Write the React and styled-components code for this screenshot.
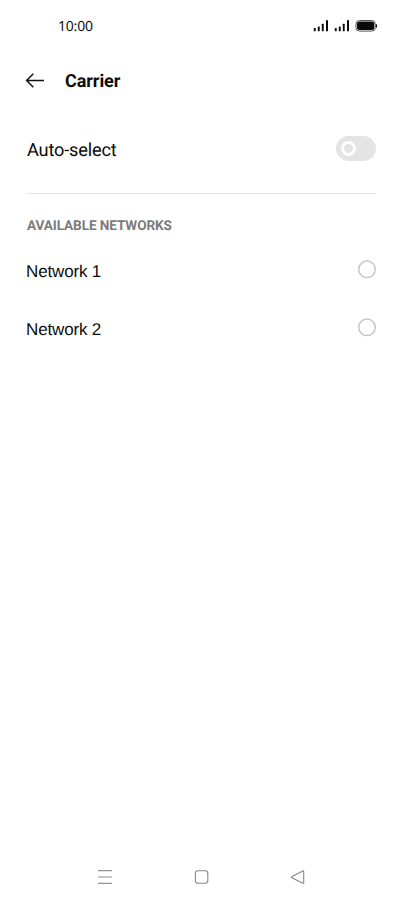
import React, { useState } from 'react';
import styled, { createGlobalStyle } from 'styled-components';

const GlobalStyle = createGlobalStyle`
  * { box-sizing: border-box; }
  body {
    margin: 0;
    background: #fff;
  }
`;

const Screen = styled.div`
  display: flex;
  flex-direction: column;
  width: 403px;
  height: 902px;
  overflow: hidden;
  background: #fff;
  color: #0c0c0c;
  font-family: Roboto, sans-serif;
  text-rendering: geometricPrecision;
`;

const StatusBar = styled.div`
  display: flex;
  align-items: center;
  justify-content: space-between;
  height: 52px;
  padding: 0 26px 0 58px;
`;

const Clock = styled.span`
  padding-top: 2px;
  font-family: "Noto Sans", sans-serif;
  font-size: 14px;
  line-height: 20px;
  letter-spacing: -0.2px;
  color: #111;
`;

const Header = styled.header`
  display: flex;
  align-items: center;
  height: 57px;
  padding-left: 25px;
`;

const BackButton = styled.button`
  display: flex;
  width: 40px;
  padding: 0;
  border: none;
  background: none;
  cursor: pointer;
`;

const Title = styled.h1`
  margin: 0;
  padding-top: 2px;
  font-size: 18px;
  font-weight: 700;
  line-height: 24px;
  letter-spacing: -0.05px;
`;

const SettingRow = styled.div`
  display: flex;
  align-items: center;
  justify-content: space-between;
  height: 85px;
  margin: 0 27px;
  padding-bottom: 5px;
  border-bottom: 1px solid #e6e6e6;
`;

const SettingLabel = styled.span`
  padding-top: 4px;
  font-size: 18.2px;
  line-height: 24px;
  letter-spacing: -0.18px;
`;

const Toggle = styled.button`
  display: flex;
  align-items: center;
  justify-content: ${({ $on }) => ($on ? 'flex-end' : 'flex-start')};
  width: 40px;
  height: 25px;
  padding: 0 4.5px;
  border: none;
  border-radius: 13px;
  background: ${({ $on }) => ($on ? '#2ad181' : '#e4e4e4')};
  cursor: pointer;
`;

const Knob = styled.span`
  width: 15px;
  height: 15px;
  border: 3px solid #fff;
  border-radius: 50%;
`;

const SectionTitle = styled.h2`
  margin: 22px 27px 4px;
  font-size: 13.6px;
  font-weight: 700;
  line-height: 20px;
  letter-spacing: -0.1px;
  color: #7b7b7b;
`;

const NetworkRow = styled.div`
  display: flex;
  align-items: center;
  justify-content: space-between;
  height: 58px;
  padding: 0 26px;
  cursor: pointer;
`;

const NetworkName = styled.span`
  font-family: "Liberation Sans", Arial, sans-serif;
  font-size: 17px;
  line-height: 20px;
  letter-spacing: -0.15px;
  padding-top: 6px;
`;

const RadioIcon = styled.svg`
  width: 20px;
  height: 20px;
  fill: none;
  stroke: ${({ $checked }) => ($checked ? '#2ad181' : '#c6c6c6')};
  stroke-width: 1.5;
`;

const NavBar = styled.nav`
  display: flex;
  align-items: center;
  justify-content: space-between;
  height: 50px;
  margin-top: auto;
  padding: 0 97px;
`;

const networks = ['Network 1', 'Network 2'];

function Radio({ checked }) {
  return (
    <RadioIcon $checked={checked} viewBox="0 0 20 20">
      <circle cx="10" cy="10.3" r="8.3" />
      {checked && <circle cx="10" cy="10.3" r="3" />}
    </RadioIcon>
  );
}

function StatusIcons() {
  return (
    <svg width="64" height="14" viewBox="313 19 64 14" fill="#0a0a0a">
      {[313.8, 334.8].map((x) => (
        <g key={x}>
          <rect x={x} y="28" width="1.9" height="3.3" rx="0.4" />
          <rect x={x + 4} y="26.5" width="1.9" height="4.8" rx="0.4" />
          <rect x={x + 8} y="23.8" width="1.9" height="7.5" rx="0.4" />
          <rect x={x + 12.2} y="20" width="2" height="11.3" rx="0.4" />
        </g>
      ))}
      <rect x="356" y="20.5" width="19.3" height="10.6" rx="3.5" fill="none" stroke="#555" />
      <rect x="357" y="21.6" width="17.3" height="8.4" rx="2.5" />
      <path d="M376 23.8c1.4.7 1.4 3.5 0 4.2z" />
    </svg>
  );
}

export default function App() {
  const [auto, setAuto] = useState(false);
  const [selected, setSelected] = useState(null);

  return (
    <>
      <GlobalStyle />
      <Screen>
        <StatusBar>
          <Clock>10:00</Clock>
          <StatusIcons />
        </StatusBar>

        <Header>
          <BackButton aria-label="Back">
            <svg width="20" height="16" viewBox="0 0 20 16" fill="none" stroke="#111" strokeWidth="1.5">
              <path d="M19 7.5H2M8.3 .8L1.6 7.5l6.7 6.8" />
            </svg>
          </BackButton>
          <Title>Carrier</Title>
        </Header>

        <SettingRow>
          <SettingLabel>Auto-select</SettingLabel>
          <Toggle $on={auto} onClick={() => setAuto(!auto)} aria-label="Auto-select">
            <Knob />
          </Toggle>
        </SettingRow>

        <SectionTitle>AVAILABLE NETWORKS</SectionTitle>
        {networks.map((name) => (
          <NetworkRow key={name} onClick={() => setSelected(name)}>
            <NetworkName>{name}</NetworkName>
            <Radio checked={selected === name} />
          </NetworkRow>
        ))}

        <NavBar>
          <svg width="16" height="16" viewBox="0 0 16 16" stroke="#929292" strokeWidth="1.1">
            <path d="M1 1.6h14M1 8h14M1 14.4h14" />
          </svg>
          <svg width="16" height="16" viewBox="0 0 16 16" fill="none" stroke="#888" strokeWidth="1.1">
            <rect x="1.4" y="1.8" width="12.4" height="12.4" rx="2.6" />
          </svg>
          <svg width="16" height="16" viewBox="0 0 16 16" fill="none" stroke="#888" strokeWidth="1.1" strokeLinejoin="round">
            <path d="M13.7 2.4v11.4q0 .8-.8.4L1.8 8.7q-.7-.5 0-1L12.9 2q.8-.4.8.4z" />
          </svg>
        </NavBar>
      </Screen>
    </>
  );
}
